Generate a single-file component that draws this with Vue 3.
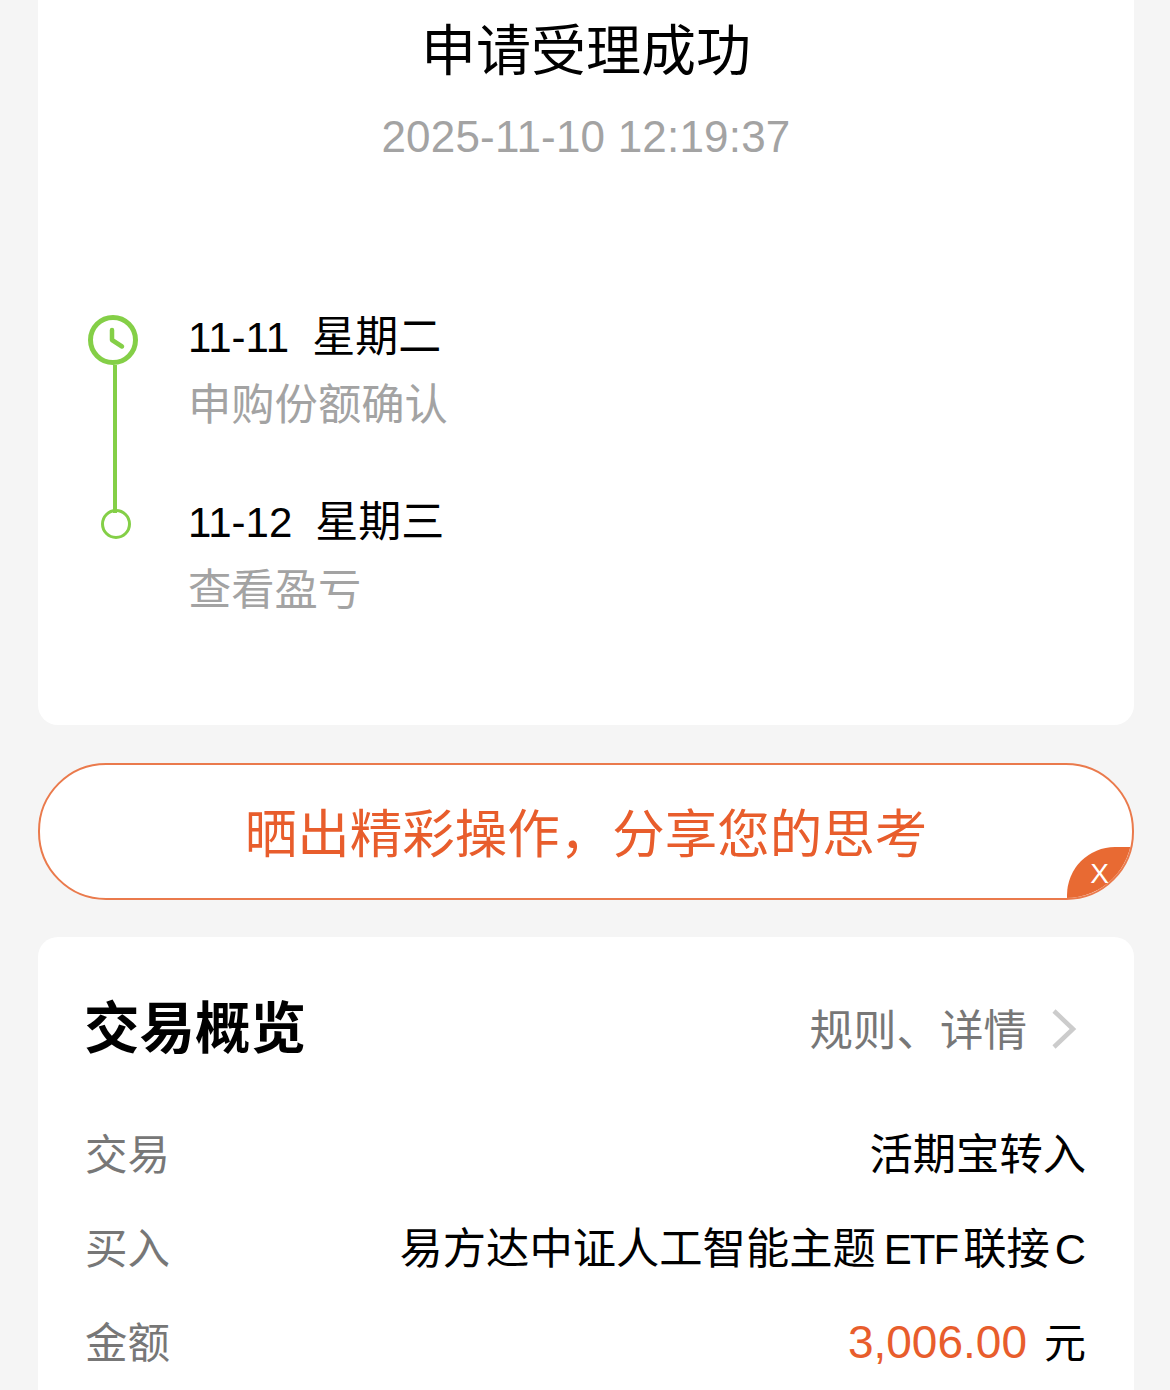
<script setup>
const steps = [
  { date: '11-11', week: '星期二', desc: '申购份额确认', current: true },
  { date: '11-12', week: '星期三', desc: '查看盈亏', current: false }
]
</script>

<template>
  <div class="page">
    <section class="card status">
      <h1 class="title">申请受理成功</h1>
      <div class="time">2025-11-10 12:19:37</div>

      <div class="timeline">
        <div v-for="(step, i) in steps" :key="step.date" class="step">
          <div class="rail">
            <svg v-if="step.current" class="clock" width="50" height="50" viewBox="0 0 50 50">
              <circle cx="25" cy="25" r="22.500" fill="none" stroke="#84cf47" stroke-width="5" />
              <path d="M24 15v10l10 6.500" fill="none" stroke="#84cf47" stroke-width="4.500" stroke-linecap="round" stroke-linejoin="round" />
            </svg>
            <span v-else class="dot"></span>
            <span v-if="i < steps.length - 1" class="line"></span>
          </div>
          <div class="step-text">
            <div class="step-date">{{ step.date }}<span class="week">{{ step.week }}</span></div>
            <div class="step-desc">{{ step.desc }}</div>
          </div>
        </div>
      </div>
    </section>

    <div class="share">
      <span class="share-text">晒出精彩操作，分享您的思考</span>
      <span class="share-close">X</span>
    </div>

    <section class="card overview">
      <div class="overview-head">
        <h2 class="overview-title">交易概览</h2>
        <div class="overview-link">
          <span class="link-text">规则、详情</span>
          <svg width="26" height="42" viewBox="0 0 26 42">
            <path d="M3 3l19 18L3 39" fill="none" stroke="#cccccc" stroke-width="4.500" />
          </svg>
        </div>
      </div>

      <div class="row">
        <span class="label">交易</span>
        <span class="value">活期宝转入</span>
      </div>
      <div class="row">
        <span class="label">买入</span>
        <span class="value">易方达中证人工智能主题<span class="latin">ETF</span>联接<span class="latin last">C</span></span>
      </div>
      <div class="row">
        <span class="label">金额</span>
        <span class="value"><span class="amount">3,006.00</span><span class="unit">元</span></span>
      </div>
    </section>
  </div>
</template>

<style>
html, body {
  margin: 0;
  background: #f5f5f5;
}
</style>

<style scoped>
.page {
  height: 1390px;
  overflow: hidden;
  box-sizing: border-box;
  padding: 0 36px 0 38px;
  background: #f5f5f5;
  font-family: "Liberation Sans", "Noto Sans CJK SC", sans-serif;
  color: #000;
}

.card {
  background: #fff;
  border-radius: 20px;
}

.status {
  height: 725px;
  border-radius: 0 0 20px 20px;
  box-sizing: border-box;
  padding-top: 12px;
  text-align: center;
}

.title {
  margin: 0;
  font-size: 55px;
  line-height: 78px;
  font-weight: 400;
}

.time {
  margin-top: 20px;
  font-size: 44px;
  letter-spacing: 0.2px;
  line-height: 54px;
  color: #a3a3a3;
}

.timeline {
  margin-top: 151px;
  padding-left: 50px;
  text-align: left;
}

.step {
  display: flex;
  height: 185px;
}

.rail {
  width: 50px;
  display: flex;
  flex-direction: column;
  align-items: center;
  flex-shrink: 0;
}

.clock {
  flex-shrink: 0;
}

.line {
  flex-shrink: 0;
  width: 4px;
  height: 148px;
  margin-left: 3px;
  background: #84cf47;
}

.dot {
  box-sizing: border-box;
  width: 30px;
  height: 30px;
  margin-top: 9px;
  margin-left: 6px;
  border: 3.500px solid #84cf47;
  border-radius: 50%;
}

.step-text {
  margin-left: 50px;
  margin-top: -12px;
}

.step-date {
  font-size: 42px;
  line-height: 68px;
}

.week {
  margin-left: 23px;
  font-size: 43px;
}

.step-desc {
  font-size: 43.300px;
  line-height: 66px;
  color: #a3a3a3;
}

.share {
  position: relative;
  height: 137px;
  box-sizing: border-box;
  margin-top: 38px;
  border: 2px solid #ea7a4c;
  border-radius: 68px;
  background: #fff;
  overflow: hidden;
  display: flex;
  align-items: center;
  justify-content: center;
}

.share-text {
  margin-top: 7px;
  font-size: 52.500px;
  line-height: 72px;
  color: #e85d2c;
}

.share-close {
  position: absolute;
  right: 0;
  bottom: 0;
  width: 65px;
  height: 51px;
  box-sizing: border-box;
  border-top-left-radius: 48px;
  background: #e86a33;
  color: #fff;
  font-size: 28px;
  line-height: 54px;
  text-align: center;
}

.overview {
  margin-top: 37px;
  padding: 52px 48px 0;
  height: 500px;
}

.overview-head {
  display: flex;
  align-items: center;
  justify-content: space-between;
  height: 80px;
  margin-bottom: 35px;
}

.overview-title {
  margin: 0 0 0 -2px;
  font-size: 55.500px;
  line-height: 80px;
  font-weight: 700;
}

.overview-link {
  display: flex;
  align-items: center;
  gap: 24px;
  padding-right: 9px;
  font-size: 43.500px;
  color: #777;
}

.link-text {
  margin-top: -4px;
}

.row {
  display: flex;
  justify-content: space-between;
  align-items: center;
  height: 94px;
  font-size: 43.300px;
}

.label {
  margin-left: -1px;
  font-size: 42.500px;
  color: #777;
}

.latin {
  margin: 0 6px 0 8px;
  font-size: 42px;
  letter-spacing: -2px;
}

.latin.last {
  margin-left: 5px;
  margin-right: 0;
  font-size: 43.300px;
  letter-spacing: 0;
}

.amount {
  color: #e85d2c;
  font-size: 46px;
}

.unit {
  margin-left: 17px;
  font-size: 42px;
}
</style>
